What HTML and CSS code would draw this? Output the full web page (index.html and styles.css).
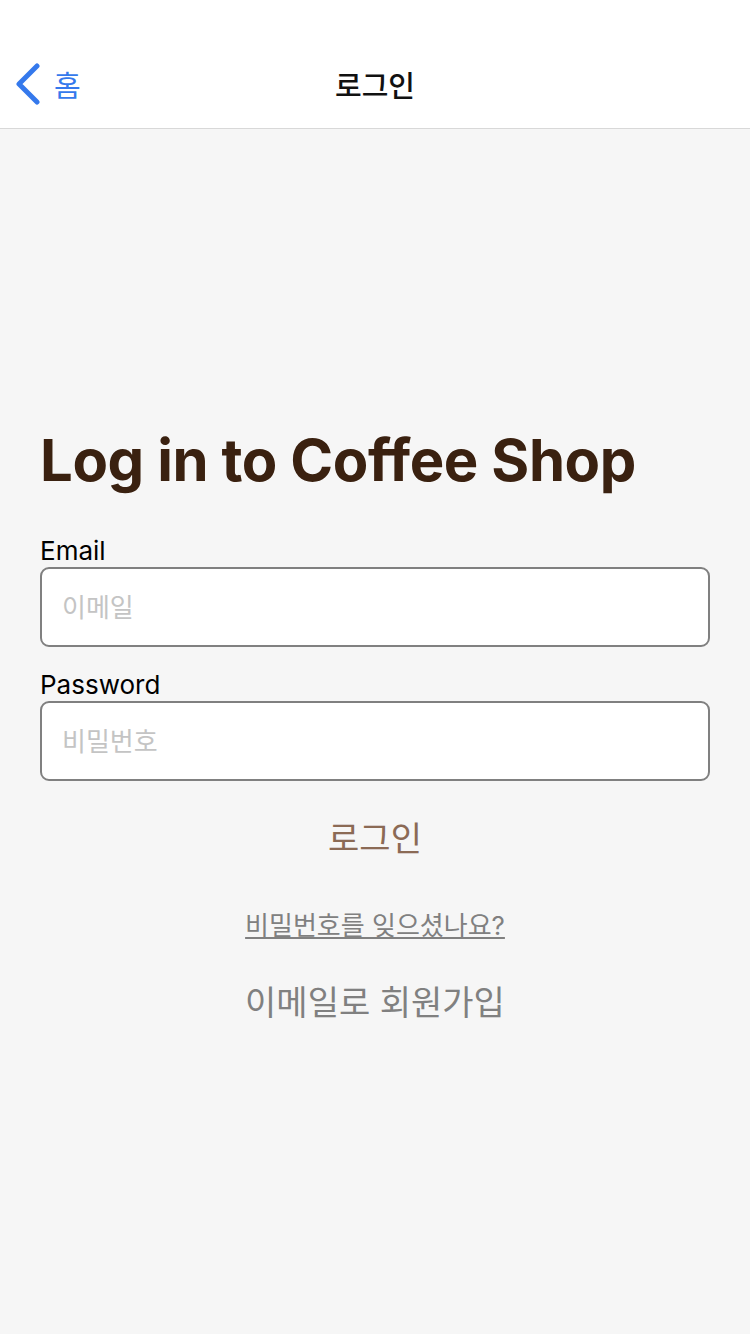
FILE: index.html
```html
<!DOCTYPE html>
<html lang="ko">
<head>
    <meta charset="UTF-8">
    <meta name="viewport" content="width=device-width, initial-scale=1.0">
    <title>로그인</title>
    <link rel="stylesheet" href="styles.css">
</head>
<body>
    <header class="topbar">
        <div class="nav-row">
            <a class="back" href="#">
                <svg class="back-icon" width="28" height="42" viewBox="0 0 28 42">
                    <path d="M23 3 L5 21 L23 39" fill="none" stroke="#3579ec" stroke-width="5" stroke-linecap="round" stroke-linejoin="round"/>
                </svg>
                <span>홈</span>
            </a>
            <div class="nav-title">로그인</div>
        </div>
    </header>

    <main class="content">
        <h1 class="heading">Log in to Coffee Shop</h1>

        <form class="login-form">
            <label class="field-label" for="email">Email</label>
            <input class="field" type="email" id="email" placeholder="이메일">

            <label class="field-label" for="password">Password</label>
            <input class="field" type="password" id="password" placeholder="비밀번호">

            <button class="login-btn" type="submit">로그인</button>
        </form>

        <div class="links">
            <a class="forgot" href="#">비밀번호를 잊으셨나요?</a>
            <a class="signup" href="#">이메일로 회원가입</a>
        </div>
    </main>
</body>
</html>
```

FILE: styles.css
```css
* {
    margin: 0;
    padding: 0;
    box-sizing: border-box;
    font-family: Inter, "Noto Sans", "Noto Sans CJK KR", sans-serif;
}

body {
    background: #f6f6f6;
    min-height: 100vh;
}

.topbar {
    background: white;
    padding-top: 40px;
    border-bottom: 1px solid #d8d8d8;
}

.nav-row {
    position: relative;
    height: 88px;
    display: flex;
    align-items: center;
    justify-content: center;
}

.back {
    position: absolute;
    left: 14px;
    top: 0;
    height: 100%;
    display: flex;
    align-items: center;
    gap: 12px;
    color: #3579ec;
    text-decoration: none;
    font-size: 29px;
}

.back-icon {
    display: block;
}

.nav-title {
    font-size: 29px;
    font-weight: 500;
    color: #111;
}

.content {
    padding: 296px 40px 0;
}

.heading {
    font-size: 58px;
    font-weight: 700;
    color: #3a2110;
    line-height: 70px;
    letter-spacing: -0.4px;
    margin-bottom: 40px;
}

.login-form {
    display: flex;
    flex-direction: column;
}

.field-label {
    font-size: 26px;
    line-height: 32px;
    color: #000;
}

.field {
    height: 80px;
    border: 2px solid #808080;
    border-radius: 9px;
    background: white;
    padding: 0 20px;
    font-size: 26px;
    margin-bottom: 22px;
    outline: none;
}

.field::placeholder {
    color: #c4c4c4;
}

.login-btn {
    background: none;
    border: none;
    color: #8b6a55;
    font-size: 34px;
    line-height: 60px;
    margin-top: 6px;
    cursor: pointer;
}

.links {
    display: flex;
    flex-direction: column;
    align-items: center;
    margin-top: 36px;
    gap: 34px;
}

.forgot {
    color: #808080;
    font-size: 26px;
    text-decoration: underline;
}

.signup {
    color: #808080;
    font-size: 34px;
    text-decoration: none;
}
```
